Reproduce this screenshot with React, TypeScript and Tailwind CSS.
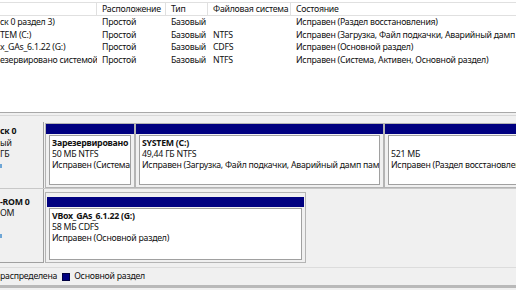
import React from "react";

const rows = [
  ["ск 0 раздел 3)", "Простой", "Базовый", "", "Исправен (Раздел восстановления)"],
  ["TEM (C:)", "Простой", "Базовый", "NTFS", "Исправен (Загрузка, Файл подкачки, Аварийный дамп памяти, Основной раздел)"],
  ["x_GAs_6.1.22 (G:)", "Простой", "Базовый", "CDFS", "Исправен (Основной раздел)"],
  ["езервировано системой", "Простой", "Базовый", "NTFS", "Исправен (Система, Активен, Основной раздел)"],
];

function Part({
  w,
  lines,
}: {
  w: string;
  lines: [string, string, string];
}) {
  return (
    <div className={`${w} shrink-0 flex flex-col border border-[#b4b4b4] bg-[#f0f0f0]`}>
      <div className="h-[10px] bg-[#000080] shrink-0" />
      <div className="mx-[3px] mt-[1px] mb-[2px] flex-1 bg-white border border-[#a0a0a0] pl-[2px] pt-[2px] overflow-hidden whitespace-nowrap leading-[11px]">
        <div className="font-bold h-[11px]">{lines[0]}</div>
        <div className="h-[11px]">{lines[1]}</div>
        <div className="h-[11px]">{lines[2]}</div>
      </div>
    </div>
  );
}

export default function App() {
  return (
    <div className="w-[516px] h-[290px] overflow-hidden bg-[#f0f0f0] text-[8.75px] tracking-[-0.25px] text-[#111] font-['Noto_Sans',sans-serif]">
      {/* top list */}
      <div className="h-[112px] bg-white pt-[2px] overflow-hidden">
        <div className="grid grid-cols-[97px_69px_42px_83px_1fr] h-[14px] border-t border-b border-[#e0e0e0] leading-[12px] whitespace-nowrap">
          <div className="border-r border-[#e0e0e0]" />
          <div className="border-r border-[#e0e0e0] pl-[5px]">Расположение</div>
          <div className="border-r border-[#e0e0e0] pl-[5px]">Тип</div>
          <div className="border-r border-[#e0e0e0] pl-[5px] overflow-hidden">Файловая система</div>
          <div className="pl-[5px]">Состояние</div>
        </div>
        {rows.map((r, i) => (
          <div key={i} className="grid grid-cols-[97px_69px_42px_83px_1fr] h-[12.5px] leading-[12.5px] whitespace-nowrap">
            <div className="overflow-hidden">{r[0]}</div>
            <div className="pl-[5px]">{r[1]}</div>
            <div className="pl-[5px]">{r[2]}</div>
            <div className="pl-[5px]">{r[3]}</div>
            <div className="pl-[5px] overflow-hidden">{r[4]}</div>
          </div>
        ))}
      </div>

      {/* splitter */}
      <div className="h-[10px] border-t border-[#a8a8a8]">
        <div className="h-[2px]" />
        <div className="h-[1px] bg-[#d8d8d8]" />
      </div>

      {/* disk 0 */}
      <div className="flex h-[67px] border-b border-[#c8c8c8]">
        <div className="w-[44px] shrink-0 border-r border-[#a0a0a0] pt-[4px] leading-[11.5px] whitespace-nowrap">
          <div className="font-bold">ск 0</div>
          <div>ый</div>
          <div>ГБ</div>
          <div className="h-[11.5px] flex items-center">
            <span className="w-[2px] h-[4px] bg-[#6ea6d6]" />
          </div>
        </div>
        <div className="flex flex-1 ml-[1px] pt-[1px] overflow-hidden">
          <Part w="w-[90px]" lines={["Зарезервировано системой", "50 МБ NTFS", "Исправен (Система, Активен, Основной раздел)"]} />
          <Part w="w-[249px]" lines={["SYSTEM  (C:)", "49,44 ГБ NTFS", "Исправен (Загрузка, Файл подкачки, Аварийный дамп памяти, Основной раздел)"]} />
          <Part w="w-[160px]" lines={["", "521 МБ", "Исправен (Раздел восстановления)"]} />
        </div>
      </div>

      {/* cd-rom 0 */}
      <div className="flex h-[74px]">
        <div className="w-[44px] shrink-0 border-r border-b border-[#a0a0a0] pt-[8px] leading-[11px] whitespace-nowrap">
          <div className="font-bold">-ROM 0</div>
          <div>OM</div>
          <div className="h-[11px]" />
          <div className="h-[11px] flex items-center">
            <span className="w-[2px] h-[4px] bg-[#6ea6d6]" />
          </div>
        </div>
        <div className="flex flex-1 ml-[1px] pt-[3px] overflow-hidden">
          <div className="w-[261px] shrink-0 flex flex-col border border-[#b4b4b4] bg-[#f0f0f0] pt-[4px]">
            <div className="h-[10px] bg-[#000080] shrink-0 mx-[1px]" />
            <div className="mx-[3px] mt-[1px] mb-[2px] flex-1 bg-white border border-[#a0a0a0] pl-[2px] pt-[2px] overflow-hidden whitespace-nowrap leading-[11px]">
              <div className="font-bold h-[11px]">VBox_GAs_6.1.22  (G:)</div>
              <div className="h-[11px]">58 МБ CDFS</div>
              <div className="h-[11px]">Исправен (Основной раздел)</div>
            </div>
          </div>
        </div>
      </div>

      {/* legend */}
      <div className="h-[4px]" />
      <div className="h-[18px] border-t border-[#dcdcdc] flex items-center whitespace-nowrap">
        <span>распределена</span>
        <span className="ml-[5px] w-[8px] h-[8px] bg-[#000080] border border-[#000040]" />
        <span className="ml-[4px]">Основной раздел</span>
      </div>
      <div className="h-[3px] bg-[#b9b9b9]" />
    </div>
  );
}
